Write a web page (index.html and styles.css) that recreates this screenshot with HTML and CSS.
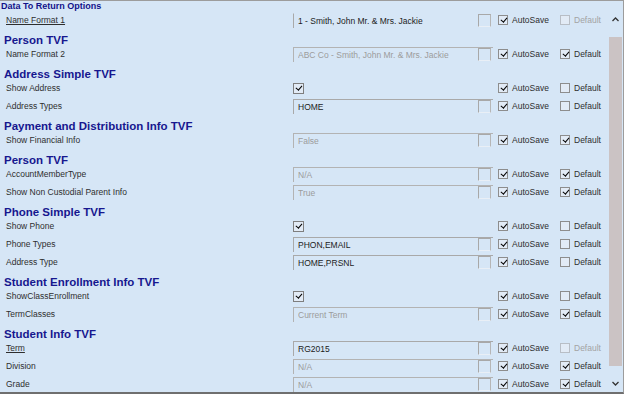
FILE: index.html
```html
<!DOCTYPE html>
<html lang="en">
<head>
  <meta charset="UTF-8" />
  <title>Data To Return Options</title>
  <link rel="stylesheet" href="styles.css">
</head>
<body>
  <div class="panel">
    <div class="title">Data To Return Options</div>
    <div class="body">
      <div class="list">
        <div class="row">
          <span class="label u">Name Format 1</span>
          <div class="value"><div class="field no-top"><span class="txt">1 - Smith, John Mr. &amp; Mrs. Jackie</span><span class="btn"></span></div></div>
          <span class="opt auto"><span class="chk on"></span>AutoSave</span>
          <span class="opt off"><span class="chk"></span>Default</span>
        </div>

        <div class="group">Person TVF</div>
        <div class="row">
          <span class="label">Name Format 2</span>
          <div class="value"><div class="field dis"><span class="txt">ABC Co - Smith, John Mr. &amp; Mrs. Jackie</span><span class="btn"></span></div></div>
          <span class="opt auto"><span class="chk on"></span>AutoSave</span>
          <span class="opt"><span class="chk on"></span>Default</span>
        </div>

        <div class="group">Address Simple TVF</div>
        <div class="row">
          <span class="label">Show Address</span>
          <div class="value"><span class="chk big on"></span></div>
          <span class="opt auto"><span class="chk on"></span>AutoSave</span>
          <span class="opt"><span class="chk"></span>Default</span>
        </div>
        <div class="row">
          <span class="label">Address Types</span>
          <div class="value"><div class="field"><span class="txt">HOME</span><span class="btn"></span></div></div>
          <span class="opt auto"><span class="chk on"></span>AutoSave</span>
          <span class="opt"><span class="chk"></span>Default</span>
        </div>

        <div class="group">Payment and Distribution Info TVF</div>
        <div class="row">
          <span class="label">Show Financial Info</span>
          <div class="value"><div class="field dis"><span class="txt">False</span><span class="btn"></span></div></div>
          <span class="opt auto"><span class="chk on"></span>AutoSave</span>
          <span class="opt"><span class="chk on"></span>Default</span>
        </div>

        <div class="group">Person TVF</div>
        <div class="row">
          <span class="label">AccountMemberType</span>
          <div class="value"><div class="field dis"><span class="txt">N/A</span><span class="btn"></span></div></div>
          <span class="opt auto"><span class="chk on"></span>AutoSave</span>
          <span class="opt"><span class="chk on"></span>Default</span>
        </div>
        <div class="row">
          <span class="label">Show Non Custodial Parent Info</span>
          <div class="value"><div class="field dis"><span class="txt">True</span><span class="btn"></span></div></div>
          <span class="opt auto"><span class="chk on"></span>AutoSave</span>
          <span class="opt"><span class="chk on"></span>Default</span>
        </div>

        <div class="group">Phone Simple TVF</div>
        <div class="row">
          <span class="label">Show Phone</span>
          <div class="value"><span class="chk big on"></span></div>
          <span class="opt auto"><span class="chk on"></span>AutoSave</span>
          <span class="opt"><span class="chk"></span>Default</span>
        </div>
        <div class="row">
          <span class="label">Phone Types</span>
          <div class="value"><div class="field"><span class="txt">PHON,EMAIL</span><span class="btn"></span></div></div>
          <span class="opt auto"><span class="chk on"></span>AutoSave</span>
          <span class="opt"><span class="chk"></span>Default</span>
        </div>
        <div class="row">
          <span class="label">Address Type</span>
          <div class="value"><div class="field"><span class="txt">HOME,PRSNL</span><span class="btn"></span></div></div>
          <span class="opt auto"><span class="chk on"></span>AutoSave</span>
          <span class="opt"><span class="chk"></span>Default</span>
        </div>

        <div class="group">Student Enrollment Info TVF</div>
        <div class="row">
          <span class="label">ShowClassEnrollment</span>
          <div class="value"><span class="chk big on"></span></div>
          <span class="opt auto"><span class="chk on"></span>AutoSave</span>
          <span class="opt"><span class="chk"></span>Default</span>
        </div>
        <div class="row">
          <span class="label">TermClasses</span>
          <div class="value"><div class="field dis"><span class="txt">Current Term</span><span class="btn"></span></div></div>
          <span class="opt auto"><span class="chk on"></span>AutoSave</span>
          <span class="opt"><span class="chk on"></span>Default</span>
        </div>

        <div class="group">Student Info TVF</div>
        <div class="row">
          <span class="label u">Term</span>
          <div class="value"><div class="field"><span class="txt">RG2015</span><span class="btn"></span></div></div>
          <span class="opt auto"><span class="chk on"></span>AutoSave</span>
          <span class="opt off"><span class="chk"></span>Default</span>
        </div>
        <div class="row">
          <span class="label">Division</span>
          <div class="value"><div class="field dis"><span class="txt">N/A</span><span class="btn"></span></div></div>
          <span class="opt auto"><span class="chk on"></span>AutoSave</span>
          <span class="opt"><span class="chk on"></span>Default</span>
        </div>
        <div class="row">
          <span class="label">Grade</span>
          <div class="value"><div class="field dis"><span class="txt">N/A</span><span class="btn"></span></div></div>
          <span class="opt auto"><span class="chk on"></span>AutoSave</span>
          <span class="opt"><span class="chk on"></span>Default</span>
        </div>
      </div>

      <div class="scroll">
        <div class="arrow">
          <svg width="7" height="5" viewBox="0 0 7 5"><polyline points="0.5,4 3.5,1 6.5,4" fill="none" stroke="#333" stroke-width="1.3"/></svg>
        </div>
        <div class="track"><div class="thumb"></div></div>
        <div class="arrow">
          <svg width="7" height="5" viewBox="0 0 7 5"><polyline points="0.5,1 3.5,4 6.5,1" fill="none" stroke="#333" stroke-width="1.3"/></svg>
        </div>
      </div>
    </div>
  </div>
</body>
</html>
```

FILE: styles.css
```css
body {
  margin: 0;
  font-family: 'Liberation Sans', Arial, sans-serif;
  background-color: #d6e6f6;
}
.panel {
  width: 624px;
  height: 394px;
  box-sizing: border-box;
  display: flex;
  flex-direction: column;
  background-color: #d6e6f6;
  border-top: 1px solid #9c9c9c;
  border-right: 1px solid #9c9c9c;
  border-bottom: 2px solid #6f6f6f;
  overflow: hidden;
}
.title {
  height: 10px;
  line-height: 10px;
  padding-left: 1px;
  font-size: 9px;
  font-weight: bold;
  color: #12128a;
}
.body {
  flex: 1;
  min-height: 0;
  display: flex;
}
.list {
  width: 609px;
  overflow: hidden;
}
.group {
  height: 16px;
  box-sizing: border-box;
  padding: 5px 0 0 4px;
  line-height: 12px;
  font-size: 11.5px;
  font-weight: bold;
  color: #17178f;
  white-space: nowrap;
}
.row {
  height: 18px;
  display: flex;
  align-items: center;
  font-size: 8.5px;
  color: #2e2e2e;
  white-space: nowrap;
}
.label {
  width: 287px;
  padding-left: 6px;
}
.label.u {
  text-decoration: underline;
}
.value {
  width: 205px;
  display: flex;
  align-items: center;
}
.field {
  width: 200px;
  height: 15px;
  box-sizing: border-box;
  display: flex;
  align-items: center;
  padding: 0 2px 0 4px;
  border-top: 1px solid #a9a9a9;
  border-left: 1px solid #a9a9a9;
  color: #1c1c1c;
}
.field.no-top {
  border-top-color: transparent;
}
.field.dis {
  border-color: #b3b3b3;
  color: #9c9c9c;
}
.field .txt {
  flex: 1;
  overflow: hidden;
}
.field .btn {
  width: 13px;
  height: 13px;
  box-sizing: border-box;
  border: 1px solid;
  border-color: #a8a8a8 #b6b6b6 #e9eff6 #a8a8a8;
}
.opt {
  display: flex;
  align-items: center;
  gap: 4px;
}
.opt.auto {
  width: 62px;
}
.opt.off {
  color: #a3a3a3;
}
.opt.off .chk {
  border-color: #b8bec6;
}
.chk {
  position: relative;
  width: 10px;
  height: 10px;
  box-sizing: border-box;
  border: 1px solid #8d8d8d;
  background-color: #e2ebf6;
}
.chk.big {
  width: 11px;
  height: 11px;
  border-color: #7e7e7e;
}
.chk.on::after {
  content: "";
  position: absolute;
  left: 2.5px;
  top: 0;
  width: 2.5px;
  height: 5px;
  border: solid #000;
  border-width: 0 1.6px 1.6px 0;
  transform: rotate(40deg);
}
.scroll {
  width: 14px;
  display: flex;
  flex-direction: column;
}
.arrow {
  height: 17px;
  display: flex;
  align-items: center;
  justify-content: center;
  padding-right: 1px;
}
.track {
  flex: 1;
  padding: 9px 1px 9px 0;
  display: flex;
}
.thumb {
  flex: 1;
  background-color: #cbc3c4;
}
```
